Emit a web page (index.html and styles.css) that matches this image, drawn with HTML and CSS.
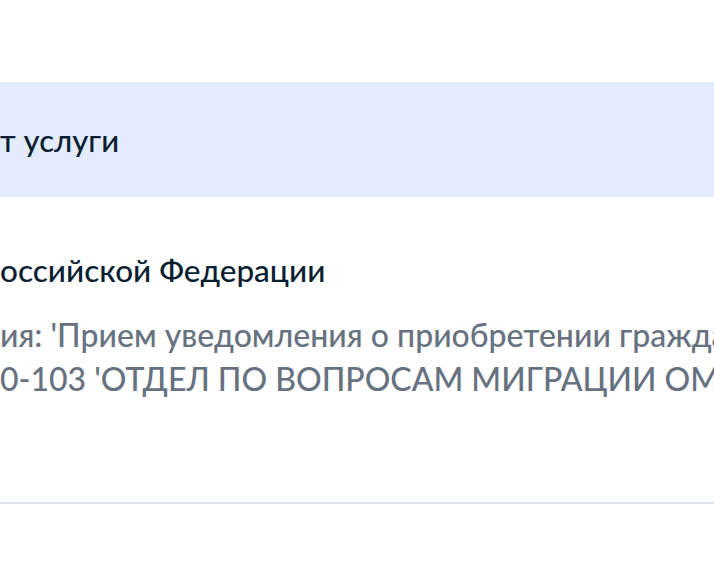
FILE: index.html
```html
<!DOCTYPE html>
<html lang="ru">
<head>
<meta charset="utf-8">
<link rel="stylesheet" href="styles.css">
</head>
<body>
<div class="page">
  <div class="band">
    <h2 class="band-title">т услуги</h2>
  </div>
  <div class="info">
    <div class="info-title">оссийской Федерации</div>
    <div class="info-text">
      <div class="line">ия: 'Прием уведомления о приобретении гражданства'</div>
      <div class="line">0-103 'ОТДЕЛ ПО ВОПРОСАМ МИГРАЦИИ ОМВД'</div>
    </div>
  </div>
  <div class="divider"></div>
</div>
</body>
</html>
```
FILE: styles.css
```css
html, body {
  margin: 0;
  padding: 0;
  background: #ffffff;
  overflow: hidden;
}
.page {
  width: 714px;
  height: 564px;
  overflow: hidden;
  font-family: Lato, "Noto Sans", sans-serif;
  padding-top: 82px;
  box-sizing: border-box;
}
.band {
  background: #e3ebfc;
  height: 115px;
  display: flex;
  align-items: center;
}
.band-title {
  margin: 0;
  font-weight: 500;
  font-size: 31px;
  color: #0b1f33;
  white-space: nowrap;
}
.info {
  padding-top: 55px;
  height: 250px;
  box-sizing: border-box;
}
.info-title {
  font-size: 31.5px;
  font-weight: 500;
  line-height: 36px;
  color: #0b1f33;
  white-space: nowrap;
}
.info-text {
  margin-top: 25px;
  font-size: 32px;
  font-weight: 500;
  line-height: 44px;
  color: #66727f;
  white-space: nowrap;
}
.divider {
  margin-top: 55px;
  height: 2px;
  background: #e1e6ef;
}
```
